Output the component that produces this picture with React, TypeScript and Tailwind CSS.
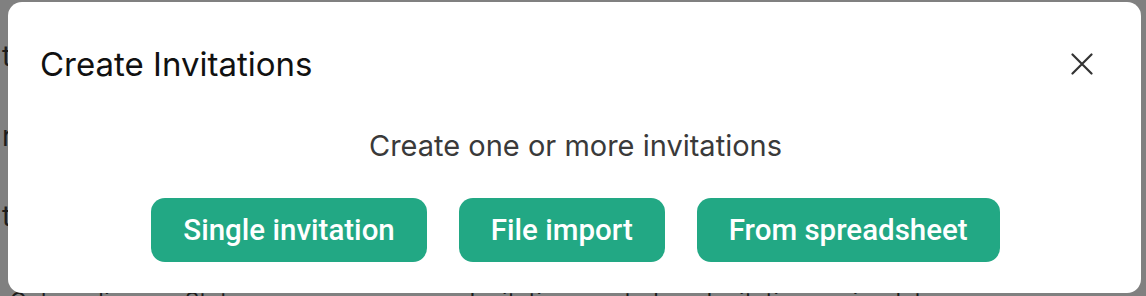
import React from "react";

export default function App() {
  return (
    <div
      className="relative h-[296px] w-full overflow-hidden bg-[#808080]"
      style={{ fontFamily: "Inter, 'Noto Sans', sans-serif" }}
    >
      <div className="absolute left-[2px] top-0 flex flex-col text-[28px] leading-[80px] text-[#1c1c1c] pt-[16px]">
        <span>t</span>
        <span>r</span>
        <span>t</span>
      </div>
      <div className="absolute left-[10px] top-[288px] text-[22px] leading-[24px] text-[#1c1c1c] whitespace-nowrap tracking-wide">
        Onboarding &nbsp;&nbsp;&nbsp;&nbsp;&nbsp; Status &nbsp;&nbsp;&nbsp;&nbsp;&nbsp;&nbsp;&nbsp;&nbsp;&nbsp;&nbsp;&nbsp;&nbsp;&nbsp;&nbsp;&nbsp;&nbsp;&nbsp;&nbsp;&nbsp;&nbsp;&nbsp;&nbsp;&nbsp;&nbsp;&nbsp;&nbsp;&nbsp;&nbsp;&nbsp;&nbsp; Invitation created &nbsp;&nbsp;&nbsp;&nbsp;&nbsp; Invitation expiry date
      </div>
      <div className="relative ml-[8px] mr-[5px] mt-[2px] h-[291px] rounded-[14px] bg-white">
        <div className="flex items-center justify-between pl-[32px] pr-[47px] pt-[44px]">
          <h2 className="text-[33px] leading-[36px] font-normal text-[#111111]">Create Invitations</h2>
          <button className="flex h-[24px] w-[24px] items-center justify-center text-[#333333]">
            <svg width="22" height="22" viewBox="0 0 22 22" fill="none" stroke="currentColor" strokeWidth="2.2" strokeLinecap="round">
              <path d="M1.5 1.5 L20.5 20.5 M20.5 1.5 L1.5 20.5" />
            </svg>
          </button>
        </div>
        <p className="mt-[47px] text-center text-[29px] leading-[34px] text-[#3a3a3a] pl-[2px]">
          Create one or more invitations
        </p>
        <div className="mt-[35px] flex justify-center gap-[32px] pl-[2px]">
          {["Single invitation", "File import", "From spreadsheet"].map((t) => (
            <button
              key={t}
              className="h-[64px] rounded-[14px] bg-[#22a884] px-[32px] text-[29.5px] font-medium text-white"
              style={{ fontFamily: "Roboto, 'Noto Sans', sans-serif" }}
            >
              {t}
            </button>
          ))}
        </div>
      </div>
    </div>
  );
}
